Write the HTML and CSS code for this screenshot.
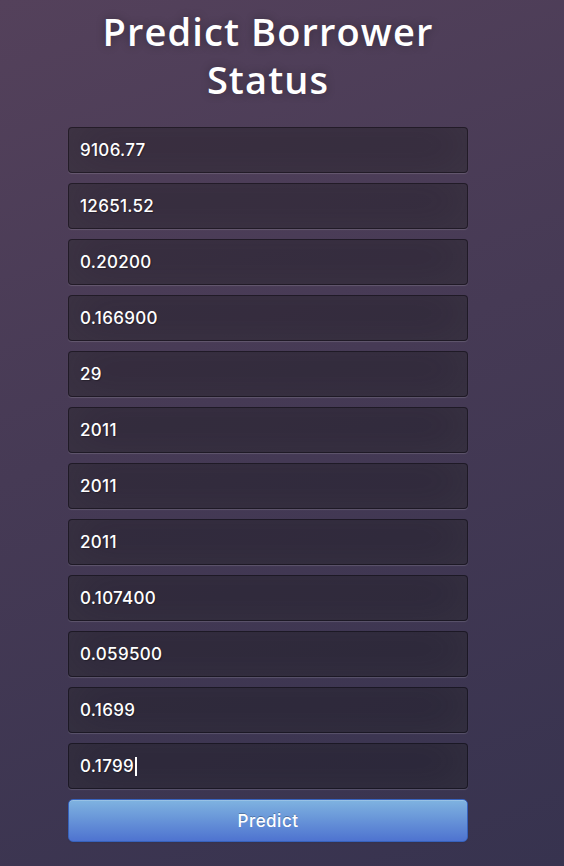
FILE: index.html
```html
<!DOCTYPE html>
<html lang="en">
<head>
<meta charset="utf-8">
<title>Predict Borrower Status</title>
<link rel="stylesheet" href="styles.css">
</head>
<body>
<div class="login">
  <h1 class="title">Predict Borrower Status</h1>
  <form class="form">
    <input class="field" type="text" value="9106.77">
    <input class="field" type="text" value="12651.52">
    <input class="field" type="text" value="0.20200">
    <input class="field" type="text" value="0.166900">
    <input class="field" type="text" value="29">
    <input class="field" type="text" value="2011">
    <input class="field" type="text" value="2011">
    <input class="field" type="text" value="2011">
    <input class="field" type="text" value="0.107400">
    <input class="field" type="text" value="0.059500">
    <input class="field" type="text" value="0.1699">
    <div class="field field-active"><span class="field-text">0.1799</span><span class="caret"></span></div>
    <button class="btn" type="button">Predict</button>
  </form>
</div>
</body>
</html>
```

FILE: styles.css
```css
html, body {
  margin: 0;
  padding: 0;
  height: 100%;
}
body {
  background: linear-gradient(160deg, #54415b 0%, #463a55 45%, #37334f 100%);
  color: #fff;
  font-family: "Open Sans", sans-serif;
  overflow: hidden;
}
.login {
  width: 400px;
  margin-left: 68px;
  padding-top: 7px;
}
.title {
  margin: 0 0 24px 0;
  font-family: "Open Sans", sans-serif;
  font-weight: 600;
  font-size: 38px;
  line-height: 48px;
  letter-spacing: 1.1px;
  text-align: center;
  color: #fff;
  text-shadow: 0 0 10px rgba(0, 0, 0, 0.3);
}
.form {
  display: flex;
  flex-direction: column;
  gap: 10px;
}
.field {
  box-sizing: border-box;
  display: flex;
  align-items: center;
  width: 100%;
  height: 46px;
  margin: 0;
  padding: 0 11px;
  font-family: "Inter", "Liberation Sans", sans-serif;
  font-size: 17px;
  font-weight: 500;
  letter-spacing: 0.3px;
  color: #fff;
  background: rgba(0, 0, 0, 0.3);
  border: 1px solid rgba(0, 0, 0, 0.35);
  border-radius: 4px;
  outline: none;
  text-shadow: 1px 1px 1px rgba(0, 0, 0, 0.3);
  box-shadow: inset 0 -5px 45px rgba(100, 100, 100, 0.2), 0 1px 1px rgba(255, 255, 255, 0.15);
}
.caret {
  display: inline-block;
  width: 2px;
  height: 19px;
  margin-left: 1px;
  background: #fff;
}
.btn {
  box-sizing: border-box;
  width: 100%;
  height: 43px;
  margin: 0;
  font-family: "Inter", "Liberation Sans", sans-serif;
  font-size: 17px;
  font-weight: 500;
  letter-spacing: 0.5px;
  color: #fff;
  text-shadow: 0 -1px 0 rgba(0, 0, 0, 0.25);
  background: linear-gradient(to bottom, #7fb3e0, #4e73d0);
  border: 1px solid #3762bc;
  border-radius: 5px;
  box-shadow: inset 0 1px 0 rgba(255, 255, 255, 0.2), 0 1px 2px rgba(0, 0, 0, 0.05);
}
```
